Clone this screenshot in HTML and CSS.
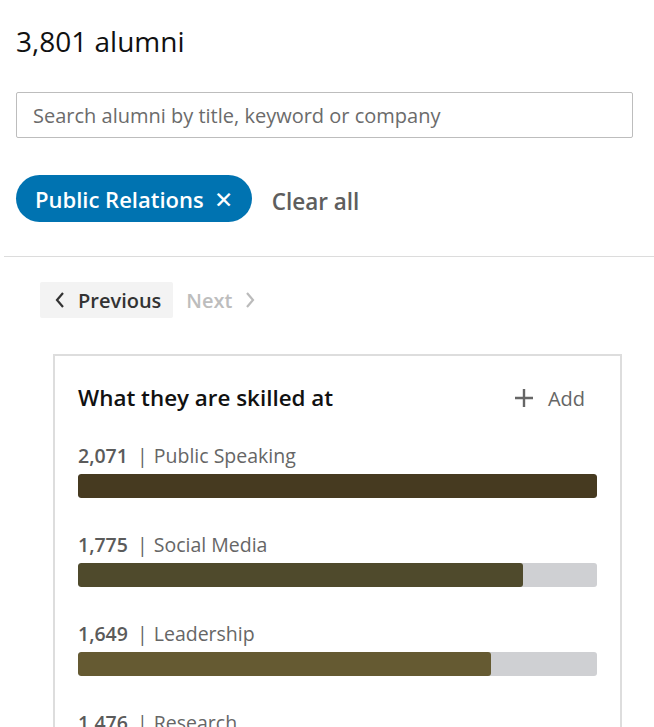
FILE: index.html
```html
<!DOCTYPE html>
<html>
<head>
<meta charset="utf-8">
<link rel="stylesheet" href="styles.css">
</head>
<body>
<div class="page">
  <div class="top">
    <h1 class="count">3,801 alumni</h1>
    <input class="search" type="text" placeholder="Search alumni by title, keyword or company">
    <div class="filters">
      <button class="chip">Public Relations <span class="chip-x">✕</span></button>
      <button class="clear">Clear all</button>
    </div>
  </div>
  <hr class="divider">
  <div class="pager">
    <button class="pg prev"><svg width="12" height="20" viewBox="0 0 12 20"><path d="M9 3 L3 10 L9 17" fill="none" stroke="#333" stroke-width="2.2"/></svg>Previous</button>
    <button class="pg next">Next<svg width="12" height="20" viewBox="0 0 12 20"><path d="M3 3 L9 10 L3 17" fill="none" stroke="#bbb" stroke-width="2.2"/></svg></button>
  </div>
  <div class="card">
    <div class="card-head">
      <h2 class="card-title">What they are skilled at</h2>
      <button class="add"><svg width="20" height="20" viewBox="0 0 20 20"><path d="M10 1 V19 M1 10 H19" stroke="#666" stroke-width="2.4"/></svg>Add</button>
    </div>
    <div class="rows">
      <div class="row">
        <div class="label"><span class="num">2,071</span> <span class="sep">|</span> Public Speaking</div>
        <div class="track"><div class="fill c1" style="width:100%"></div></div>
      </div>
      <div class="row">
        <div class="label"><span class="num">1,775</span> <span class="sep">|</span> Social Media</div>
        <div class="track"><div class="fill c2" style="width:85.7%"></div></div>
      </div>
      <div class="row">
        <div class="label"><span class="num">1,649</span> <span class="sep">|</span> Leadership</div>
        <div class="track"><div class="fill c3" style="width:79.6%"></div></div>
      </div>
      <div class="row">
        <div class="label"><span class="num">1,476</span> <span class="sep">|</span> Research</div>
        <div class="track"><div class="fill c4" style="width:71.3%"></div></div>
      </div>
    </div>
  </div>
</div>
</body>
</html>
```
FILE: styles.css
```css
* { box-sizing: border-box; }
html, body { margin: 0; padding: 0; background: #fff; overflow: hidden; }
body { font-family: "Open Sans", "Noto Sans", sans-serif; color: #222; }
.page { width: 654px; height: 727px; overflow: hidden; }
.top { padding: 0 21px 0 16px; }
.count {
  margin: 0;
  padding-top: 22px;
  font-size: 28px;
  font-weight: 400;
  line-height: 38px;
  color: #111;
}
.search {
  display: block;
  width: 617px;
  height: 46px;
  margin-top: 32px;
  border: 1.5px solid #bdbdbd;
  border-radius: 2px;
  padding: 0 16px;
  font-family: inherit;
  font-size: 20px;
  color: #333;
}
.search::placeholder { color: #6b6b6b; }
.filters {
  display: flex;
  align-items: center;
  gap: 20px;
  margin-top: 37px;
}
.chip {
  height: 47px;
  padding: 0 19px 0 19px;
  border: 0;
  border-radius: 24px;
  background: #0073b1;
  color: #fff;
  font-family: inherit;
  font-size: 22px;
  font-weight: 600;
  display: flex;
  align-items: center;
  gap: 10px;
}
.chip-x { font-size: 23px; font-weight: 400; }
.clear {
  border: 0;
  background: none;
  padding: 0;
  margin-top: 6px;
  font-family: inherit;
  font-size: 22.5px;
  font-weight: 600;
  color: #5e5e5e;
}
.divider {
  margin: 34px 0 0 4px;
  border: 0;
  border-top: 1.5px solid #dcdcdc;
}
.pager {
  display: flex;
  gap: 13px;
  padding: 25px 0 0 40px;
}
.pg {
  height: 36px;
  border: 0;
  border-radius: 2px;
  font-family: inherit;
  font-size: 20px;
  font-weight: 600;
  display: flex;
  align-items: center;
  gap: 12px;
}
.prev { background: #f3f3f3; color: #333; padding: 0 12px 0 14px; }
.next { background: none; color: #bdbdbd; padding: 0; }
.card {
  margin: 36px 0 0 53px;
  width: 569px;
  border: 2px solid #dddddd;
  border-bottom: 0;
  padding: 27px 23px 0 23px;
}
.card-head {
  display: flex;
  justify-content: space-between;
  align-items: center;
}
.card-title {
  margin: 0;
  font-size: 22.4px;
  font-weight: 600;
  color: #111;
  line-height: 30px;
}
.add {
  border: 0;
  background: none;
  font-family: inherit;
  font-size: 20px;
  color: #666;
  display: flex;
  align-items: center;
  gap: 14px;
  padding: 0;
  margin-right: 12px;
}
.rows { margin-top: 29px; }
.row { margin-bottom: 33px; }
.label {
  font-size: 19.5px;
  color: #666;
  line-height: 28px;
  margin-bottom: 4px;
}
.num { font-weight: 600; color: #5b5b5b; }
.sep { margin: 0 1px 0 4px; }
.track {
  height: 24px;
  background: #cfd0d3;
  border-radius: 3px;
  overflow: hidden;
}
.fill { height: 100%; border-radius: 3px; }
.c1 { background: #463a20; }
.c2 { background: #4f4a2c; }
.c3 { background: #655a32; }
.c4 { background: #6f6538; }
```
